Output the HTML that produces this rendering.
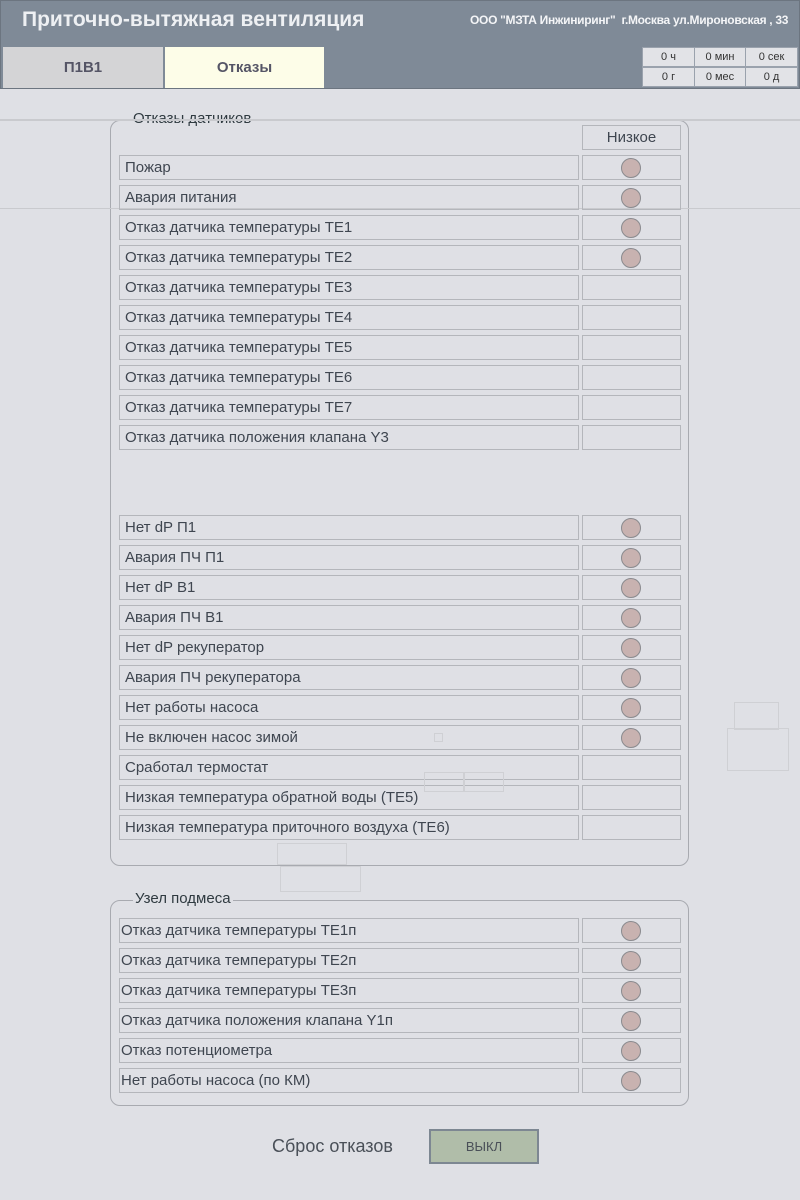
<!DOCTYPE html>
<html><head><meta charset="utf-8"><style>
*{box-sizing:border-box;margin:0;padding:0}
body{width:800px;height:1200px;background:#dfe0e5;font-family:"Liberation Sans","Noto Sans CJK SC",sans-serif;color:#3f4650;position:relative;overflow:hidden}
.a{position:absolute}
.hdr{left:0;top:0;width:800px;height:89px;background:#7f8a97;border:1px solid #6c7580}
.title{left:22px;top:8px;font-size:21px;font-weight:bold;color:#eef0f3}
.org{left:470px;top:13px;font-size:12px;font-weight:bold;color:#f4f5f7;letter-spacing:-0.3px}
.tab{top:47px;height:41px;font-size:15px;font-weight:bold;display:flex;align-items:center;justify-content:center;color:#556}
.tc{background:#e2e3e7;border:1px solid #9aa2ad;font-size:11px;display:flex;align-items:center;justify-content:center;color:#333;height:20px}
.grp{border:1px solid #a8aab0;border-radius:10px}
.gt{font-size:15px;color:#2f3a40;background:transparent}
.lb{left:119px;width:460px;height:25px;border:1px solid #b4b6bb;font-size:15px;padding-left:5px;line-height:23px}
.ib{left:582px;width:99px;height:25px;border:1px solid #b4b6bb}
.c{position:absolute;left:38px;top:2px;width:20px;height:20px;border-radius:50%;background:#c8b2b0;border:1px solid #8a8a8e}
.hl{left:0;width:800px;height:2px;background:#c9cace}
.ob{border:1px solid #cfd0d4}
</style></head><body>
<div class="a hdr"></div>
<div class="a title">Приточно-вытяжная вентиляция</div>
<div class="a org">ООО "МЗТА Инжиниринг"&nbsp; г.Москва ул.Мироновская , 33</div>
<div class="a tab" style="left:3px;width:160px;background:#d4d4d6;">П1В1</div>
<div class="a tab" style="left:165px;width:159px;background:#fdfde8;">Отказы</div>
<div class="a tc" style="left:642px;top:47px;width:53px">0 ч</div>
<div class="a tc" style="left:694px;top:47px;width:52px">0 мин</div>
<div class="a tc" style="left:745px;top:47px;width:53px">0 сек</div>
<div class="a tc" style="left:642px;top:67px;width:53px">0 г</div>
<div class="a tc" style="left:694px;top:67px;width:52px">0 мес</div>
<div class="a tc" style="left:745px;top:67px;width:53px">0 д</div>

<div class="a grp" style="left:110px;top:120px;width:579px;height:746px"></div>
<div class="a gt" style="left:133px;top:110px">Отказы датчиков</div>
<div class="a hl" style="top:119px"></div>
<div class="a hl" style="top:208px;height:1px"></div>
<div class="a ib" style="top:125px;text-align:center;font-size:15px;line-height:23px">Низкое</div>

<div class="a lb" style="top:155px">Пожар</div><div class="a ib" style="top:155px"><div class="c"></div></div>
<div class="a lb" style="top:185px">Авария питания</div><div class="a ib" style="top:185px"><div class="c"></div></div>
<div class="a lb" style="top:215px">Отказ датчика температуры ТЕ1</div><div class="a ib" style="top:215px"><div class="c"></div></div>
<div class="a lb" style="top:245px">Отказ датчика температуры ТЕ2</div><div class="a ib" style="top:245px"><div class="c"></div></div>
<div class="a lb" style="top:275px">Отказ датчика температуры ТЕ3</div><div class="a ib" style="top:275px"></div>
<div class="a lb" style="top:305px">Отказ датчика температуры ТЕ4</div><div class="a ib" style="top:305px"></div>
<div class="a lb" style="top:335px">Отказ датчика температуры ТЕ5</div><div class="a ib" style="top:335px"></div>
<div class="a lb" style="top:365px">Отказ датчика температуры ТЕ6</div><div class="a ib" style="top:365px"></div>
<div class="a lb" style="top:395px">Отказ датчика температуры ТЕ7</div><div class="a ib" style="top:395px"></div>
<div class="a lb" style="top:425px">Отказ датчика положения клапана Y3</div><div class="a ib" style="top:425px"></div>

<div class="a lb" style="top:515px">Нет dP П1</div><div class="a ib" style="top:515px"><div class="c"></div></div>
<div class="a lb" style="top:545px">Авария ПЧ П1</div><div class="a ib" style="top:545px"><div class="c"></div></div>
<div class="a lb" style="top:575px">Нет dP В1</div><div class="a ib" style="top:575px"><div class="c"></div></div>
<div class="a lb" style="top:605px">Авария ПЧ В1</div><div class="a ib" style="top:605px"><div class="c"></div></div>
<div class="a lb" style="top:635px">Нет dP рекуператор</div><div class="a ib" style="top:635px"><div class="c"></div></div>
<div class="a lb" style="top:665px">Авария ПЧ рекуператора</div><div class="a ib" style="top:665px"><div class="c"></div></div>
<div class="a lb" style="top:695px">Нет работы насоса</div><div class="a ib" style="top:695px"><div class="c"></div></div>
<div class="a lb" style="top:725px">Не включен насос зимой</div><div class="a ib" style="top:725px"><div class="c"></div></div>
<div class="a lb" style="top:755px">Сработал термостат</div><div class="a ib" style="top:755px"></div>
<div class="a lb" style="top:785px">Низкая температура обратной воды (ТЕ5)</div><div class="a ib" style="top:785px"></div>
<div class="a lb" style="top:815px">Низкая температура приточного воздуха (ТЕ6)</div><div class="a ib" style="top:815px"></div>

<div class="a ob" style="left:434px;top:733px;width:9px;height:9px"></div>
<div class="a ob" style="left:424px;top:772px;width:40px;height:20px"></div>
<div class="a ob" style="left:464px;top:772px;width:40px;height:20px"></div>
<div class="a ob" style="left:734px;top:702px;width:45px;height:28px"></div>
<div class="a ob" style="left:727px;top:728px;width:62px;height:43px"></div>
<div class="a ob" style="left:277px;top:843px;width:70px;height:22px"></div>
<div class="a ob" style="left:280px;top:866px;width:81px;height:26px"></div>

<div class="a grp" style="left:110px;top:900px;width:579px;height:206px"></div>
<div class="a gt" style="left:133px;top:890px;background:#dfe0e5;padding:0 2px">Узел подмеса</div>
<div class="a lb" style="top:918px;padding-left:1px">Отказ датчика температуры ТЕ1п</div><div class="a ib" style="top:918px"><div class="c"></div></div>
<div class="a lb" style="top:948px;padding-left:1px">Отказ датчика температуры ТЕ2п</div><div class="a ib" style="top:948px"><div class="c"></div></div>
<div class="a lb" style="top:978px;padding-left:1px">Отказ датчика температуры ТЕ3п</div><div class="a ib" style="top:978px"><div class="c"></div></div>
<div class="a lb" style="top:1008px;padding-left:1px">Отказ датчика положения клапана Y1п</div><div class="a ib" style="top:1008px"><div class="c"></div></div>
<div class="a lb" style="top:1038px;padding-left:1px">Отказ потенциометра</div><div class="a ib" style="top:1038px"><div class="c"></div></div>
<div class="a lb" style="top:1068px;padding-left:1px">Нет работы насоса (по КМ)</div><div class="a ib" style="top:1068px"><div class="c"></div></div>

<div class="a" style="left:272px;top:1136px;font-size:18px;color:#4a5058">Сброс отказов</div>
<div class="a" style="left:429px;top:1129px;width:110px;height:35px;background:#b0bda9;border:2px solid #7d8792;font-size:13px;display:flex;align-items:center;justify-content:center;color:#4a5058">ВЫКЛ</div>
</body></html>
